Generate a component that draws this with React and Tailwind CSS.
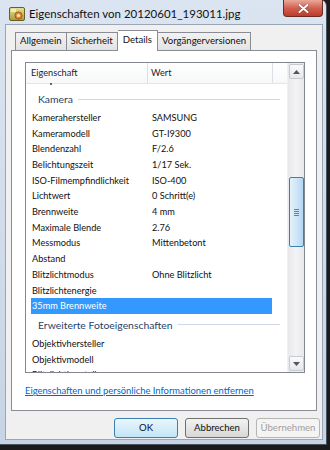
import React from "react";

const rows1 = [
  ["Kamerahersteller", "SAMSUNG"],
  ["Kameramodell", "GT-I9300"],
  ["Blendenzahl", "F/2.6"],
  ["Belichtungszeit", "1/17 Sek."],
  ["ISO-Filmempfindlichkeit", "ISO-400"],
  ["Lichtwert", "0 Schritt(e)"],
  ["Brennweite", "4 mm"],
  ["Maximale Blende", "2.76"],
  ["Messmodus", "Mittenbetont"],
  ["Abstand", ""],
  ["Blitzlichtmodus", "Ohne Blitzlicht"],
  ["Blitzlichtenergie", ""],
];

function Row({ label, value, selected }) {
  return (
    <div className="h-[15.7px] shrink-0 flex pl-[5px]">
      <div
        className={
          "w-[241px] h-full flex items-center " +
          (selected ? "bg-[#3399ff] text-white" : "text-[#111]")
        }
      >
        <div className="w-[121px] pl-[1px] whitespace-nowrap overflow-hidden">{label}</div>
        <div className="whitespace-nowrap">{value}</div>
      </div>
    </div>
  );
}

function Group({ title, h }) {
  return (
    <div className={"shrink-0 flex items-center pl-[5px] " + h}>
      <div className="w-[249px] flex items-center pl-[7px] gap-[5px]">
        <span className="text-[10.4px] text-[#2a3f66] whitespace-nowrap leading-none">{title}</span>
        <div className="flex-1 h-px bg-[#cfd9e6]" />
      </div>
    </div>
  );
}

function AppIcon() {
  return (
    <svg width="16" height="16" viewBox="0 0 16 16">
      <defs>
        <linearGradient id="ig" x1="0" y1="0" x2="0" y2="1">
          <stop offset="0" stopColor="#e9e39a" />
          <stop offset="1" stopColor="#a99a3a" />
        </linearGradient>
      </defs>
      <rect x="0.5" y="1.5" width="15" height="13" rx="1.5" fill="url(#ig)" stroke="#6b5e22" />
      <rect x="2" y="3" width="5" height="3" fill="#f6f3cf" opacity="0.8" />
      <circle cx="9.5" cy="9.5" r="3.6" fill="#e58a2a" stroke="#8a4a12" strokeWidth="0.8" />
      <circle cx="9.5" cy="9.5" r="1.6" fill="#f8e9c4" />
    </svg>
  );
}

function ArrowBtn({ up }) {
  return (
    <div className="h-[15px] w-[15px] shrink-0 flex items-center justify-center border border-[#c7cbd1] rounded-[2px] bg-gradient-to-b from-[#fbfbfb] to-[#e6e7ea]">
      <svg width="7" height="4" viewBox="0 0 7 4">
        {up ? (
          <path d="M0 4 L3.5 0 L7 4 Z" fill="#4d5663" />
        ) : (
          <path d="M0 0 L3.5 4 L7 0 Z" fill="#4d5663" />
        )}
      </svg>
    </div>
  );
}

function Button({ children, isDefault, disabled }) {
  return (
    <div
      className={
        "w-[64px] h-[20px] rounded-[3px] flex items-center justify-center text-[9.6px] border " +
        (disabled
          ? "border-[#b5b5b5] bg-[#f4f4f4] text-[#a0a0a0]"
          : isDefault
          ? "border-[#3c7fb1] bg-gradient-to-b from-[#eaf6fd] to-[#c4e5f6] text-[#111]"
          : "border-[#707070] bg-gradient-to-b from-[#f2f2f2] to-[#d8d8d8] text-[#111]")
      }
    >
      {children}
    </div>
  );
}

export default function App() {
  return (
    <div className="w-[330px] h-[450px] overflow-hidden bg-[#1b1b1b] font-['Lato',sans-serif] relative">
      <div className="w-[327px] h-[445px] flex flex-col bg-gradient-to-b from-[#dbe5f1] to-[#c6d4e5] rounded-tr-[6px] border-r border-b border-[#4a525c]">
        {/* title bar */}
        <div className="h-[24px] shrink-0 flex items-center pl-[9px] gap-[3px] pt-[4px]">
          <AppIcon />
          <span className="text-[11.5px] text-[#111] whitespace-nowrap pl-[1px]">
            Eigenschaften von 20120601_193011.jpg
          </span>
        </div>
        {/* client */}
        <div className="flex-1 ml-[5px] mr-[3px] mb-[4px] bg-[#f0f0f0] border border-[#9aa6b6] flex flex-col text-[9.2px]">
          {/* tabs */}
          <div className="h-[25px] shrink-0 flex items-end pl-[9px] relative z-10 text-[9.6px]">
            <div className="h-[18px] px-[4px] flex items-center border border-[#898c95] border-b-0 bg-gradient-to-b from-[#f2f2f2] to-[#e3e3e3] text-[#111]">
              Allgemein
            </div>
            <div className="h-[18px] px-[4px] flex items-center border border-[#898c95] border-b-0 border-l-0 bg-gradient-to-b from-[#f2f2f2] to-[#e3e3e3] text-[#111]">
              Sicherheit
            </div>
            <div className="h-[21px] px-[5px] mb-[-1px] flex items-center border border-[#898c95] border-b-0 border-l-0 bg-white text-[#111] pb-[2px]">
              Details
            </div>
            <div className="h-[18px] px-[4px] flex items-center border border-[#898c95] border-b-0 border-l-0 bg-gradient-to-b from-[#f2f2f2] to-[#e3e3e3] text-[#111]">
              Vorgängerversionen
            </div>
          </div>
          {/* tab panel */}
          <div className="h-[361px] shrink-0 mx-[5px] bg-white border border-[#898c95] flex flex-col pl-[13px] pt-[11px]">
            {/* listview */}
            <div className="w-[280px] h-[311px] shrink-0 border border-[#828790] flex overflow-hidden">
              <div className="flex-1 flex flex-col overflow-hidden">
                {/* header */}
                <div className="h-[21px] shrink-0 flex bg-gradient-to-b from-white to-[#f7f8f9] border-b border-[#e5e5e5] text-[#1e1e1e]">
                  <div className="w-[122px] flex items-center pl-[5px] border-r border-[#dcdfe3]">
                    Eigenschaft
                  </div>
                  <div className="w-[125px] flex items-center pl-[3px] border-r border-[#dcdfe3]">
                    Wert
                  </div>
                </div>
                {/* dot row */}
                <div className="h-[5px] shrink-0 relative">
                  <div className="absolute left-[24px] top-[-1px] w-[2px] h-[2px] bg-[#666]" />
                </div>
                <Group title="Kamera" h="h-[21px]" />
                {rows1.map(([l, v]) => (
                  <Row key={l} label={l} value={v} />
                ))}
                <Row label="35mm Brennweite" value="" selected />
                <Group title="Erweiterte Fotoeigenschaften" h="h-[22px]" />
                <Row label="Objektivhersteller" value="" />
                <Row label="Objektivmodell" value="" />
                <Row label="Blitzlichthersteller" value="" />
              </div>
              {/* scrollbar */}
              <div className="w-[17px] shrink-0 bg-gradient-to-r from-[#e8e8ec] via-[#f3f3f5] to-[#e8e8ec] border-l border-[#eef0f2] flex flex-col items-center py-[1px]">
                <ArrowBtn up />
                <div className="h-[98px] shrink-0" />
                <div className="w-[15px] h-[70px] shrink-0 rounded-[2px] border border-[#3c7fb1] bg-gradient-to-r from-[#e3f1fb] via-[#cfe6f8] to-[#b2d6f2] flex flex-col items-center justify-center gap-[1px]">
                  <div className="w-[5px] h-px bg-[#5a86a8]" />
                  <div className="w-[5px] h-px bg-[#5a86a8]" />
                  <div className="w-[5px] h-px bg-[#5a86a8]" />
                  <div className="w-[5px] h-px bg-[#5a86a8]" />
                </div>
                <div className="flex-1" />
                <ArrowBtn />
              </div>
            </div>
            <div className="mt-[11px] text-[9.4px] text-[#0066cc] underline whitespace-nowrap">
              Eigenschaften und persönliche Informationen entfernen
            </div>
          </div>
          {/* buttons */}
          <div className="flex justify-end gap-[7px] pr-[2px] mt-[7px]">
            <Button isDefault>OK</Button>
            <Button>Abbrechen</Button>
            <Button disabled>Übernehmen</Button>
          </div>
        </div>
      </div>
      {/* close button */}
      <div className="absolute top-0 left-[283px] w-[40px] h-[17px] rounded-b-[4px] border border-t-0 border-[#6b2b22] bg-gradient-to-b from-[#e9a99b] via-[#d0604f] to-[#c0392b] flex items-center justify-center">
        <svg width="11" height="9" viewBox="0 0 11 9">
          <path d="M1.5 1 L9.5 8 M9.5 1 L1.5 8" stroke="#5a1a12" strokeWidth="3" strokeLinecap="round" opacity="0.5" />
          <path d="M1.5 1 L9.5 8 M9.5 1 L1.5 8" stroke="#ffffff" strokeWidth="2" strokeLinecap="round" />
        </svg>
      </div>
    </div>
  );
}
